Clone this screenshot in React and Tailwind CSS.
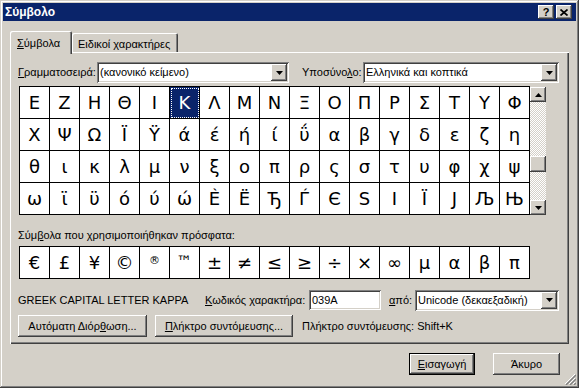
import React from "react";

const raised =
  "shadow-[inset_-1px_-1px_0_#404040,inset_1px_1px_0_#fff,inset_-2px_-2px_0_#808080,inset_2px_2px_0_#d4d0c8]";
const sunken =
  "shadow-[inset_1px_1px_0_#808080,inset_-1px_-1px_0_#fff,inset_2px_2px_0_#404040,inset_-2px_-2px_0_#d4d0c8]";

const rows = [
  "ΕΖΗΘΙΚΛΜΝΞΟΠΡΣΤΥΦ",
  "ΧΨΩΪΫάέήίΰαβγδεζη",
  "θικλμνξοπρςστυφχψ",
  "ωϊϋόύώЀЁЂЃЄЅІЇЈЉЊ",
];

const recent = ["€", "£", "¥", "©", "®", "™", "±", "≠", "≤", "≥", "÷", "×", "∞", "μ", "α", "β", "π"];

function U({ children }) {
  return <span className="underline decoration-1 underline-offset-[1px]">{children}</span>;
}

function Tri({ up }) {
  return (
    <svg width="7" height="4" viewBox="0 0 7 4" className={up ? "rotate-180" : ""}>
      <polygon points="0,0 7,0 3.5,4" fill="#000" />
    </svg>
  );
}

function Combo({ value, className }) {
  return (
    <div className={`flex h-[21px] bg-white p-[2px] ${sunken} ${className}`}>
      <div className="flex-1 pl-[1px] leading-[17px] whitespace-nowrap overflow-hidden">{value}</div>
      <div className={`w-[16px] h-[17px] bg-[#d4d0c8] flex items-center justify-center ${raised}`}>
        <Tri />
      </div>
    </div>
  );
}

function Button({ children, className = "", isDefault }) {
  if (isDefault) {
    return (
      <div className={`border border-black bg-[#d4d0c8] ${className}`}>
        <div className={`h-full flex items-center justify-center ${raised}`}>{children}</div>
      </div>
    );
  }
  return (
    <div className={`flex items-center justify-center bg-[#d4d0c8] ${raised} ${className}`}>{children}</div>
  );
}

function Cell({ ch, selected }) {
  let size = "items-center text-[18px]";
  if (ch === "®") size = "items-start pt-[6px] text-[11px]";
  if (ch === "™") size = "items-start pt-[3px] text-[16px]";
  return (
    <div
      className={`h-[32px] border-r border-b border-black flex justify-center ${size} ${
        selected
          ? "bg-[#0a246a] text-white outline-1 outline-dotted outline-white outline-offset-[-2px]"
          : "bg-white"
      }`}
    >
      {ch}
    </div>
  );
}

export default function App() {
  return (
    <div className="relative w-[579px] h-[388px] bg-[#d4d0c8] p-[3px] flex flex-col text-[11px] text-black font-['Liberation_Sans',Arial,sans-serif] shadow-[inset_-1px_-1px_0_#404040,inset_1px_1px_0_#d4d0c8,inset_-2px_-2px_0_#808080,inset_2px_2px_0_#fff] overflow-hidden">
      {/* title bar */}
      <div className="h-[18px] bg-[#0a246a] flex items-center justify-between pl-[2px] pr-[4px]">
        <span className="text-white font-bold text-[12px]">Σύμβολο</span>
        <div className="flex gap-[2px]">
          <div className={`w-[16px] h-[14px] bg-[#d4d0c8] flex items-center justify-center font-bold text-[11px] leading-none ${raised}`}>
            ?
          </div>
          <div className={`w-[16px] h-[14px] bg-[#d4d0c8] flex items-center justify-center ${raised}`}>
            <svg width="8" height="7" viewBox="0 0 8 7">
              <path d="M0.5 0.5 L7.5 6.5 M7.5 0.5 L0.5 6.5" stroke="#000" strokeWidth="1.7" />
            </svg>
          </div>
        </div>
      </div>

      {/* tabs */}
      <div className="ml-[7px] mt-[10px] flex items-end h-[21px]">
        <div className="relative z-10 w-[62px] h-[23px] -mb-[2px] bg-[#d4d0c8] pl-[7px] pt-[4px] rounded-t-[2px] shadow-[inset_1px_1px_0_#fff,inset_-1px_0_0_#404040,inset_-2px_0_0_#808080]">
          <U>Σ</U>ύμβολα
        </div>
        <div className="w-[106px] h-[19px] bg-[#d4d0c8] pl-[6px] pt-[3px] rounded-t-[2px] shadow-[inset_1px_1px_0_#fff,inset_-1px_0_0_#404040,inset_-2px_0_0_#808080]">
          Ειδικοί χαρακτήρες
        </div>
      </div>

      {/* panel */}
      <div className="ml-[7px] w-[559px] h-[292px] flex flex-col shadow-[inset_1px_1px_0_#fff,inset_-1px_-1px_0_#404040,inset_-2px_-2px_0_#808080]">
        <div className="mt-[10px] pl-[8px] flex items-center h-[21px]">
          <span className="w-[79px] whitespace-nowrap">
            <U>Γ</U>ραμματοσειρά:
          </span>
          <Combo value="(κανονικό κείμενο)" className="w-[192px]" />
          <span className="ml-[13px] w-[61px] whitespace-nowrap">
            Υποσύνο<U>λ</U>ο:
          </span>
          <Combo value="Ελληνικά και κοπτικά" className="w-[196px]" />
        </div>

        {/* symbol grid */}
        <div className="mt-[3px] pl-[9px] flex">
          <div className="grid grid-cols-[repeat(17,30px)] border-l border-t border-black font-['DejaVu_Sans',sans-serif]">
            {rows.map((r, ri) =>
              [...r].map((ch, ci) => <Cell key={`${ri}-${ci}`} ch={ch} selected={ri === 0 && ci === 5} />)
            )}
          </div>
          <div className="mt-[1px] w-[16px] h-[128px] flex flex-col bg-[repeating-conic-gradient(#fff_0_25%,#d4d0c8_0_50%)] bg-[length:2px_2px]">
            <div className={`h-[15px] bg-[#d4d0c8] flex items-center justify-center ${raised}`}>
              <Tri up />
            </div>
            <div className="flex-1">
              <div className={`mt-[54px] h-[16px] bg-[#d4d0c8] ${raised}`} />
            </div>
            <div className={`h-[15px] bg-[#d4d0c8] flex items-center justify-center ${raised}`}>
              <Tri />
            </div>
          </div>
        </div>

        <div className="mt-[14px] pl-[8px] h-[13px] leading-[13px]">
          Σύμ<U>β</U>ολα που χρησιμοποιήθηκαν πρόσφατα:
        </div>
        <div className="mt-[4px] pl-[9px] flex">
          <div className="grid grid-cols-[repeat(17,30px)] border-l border-t border-black font-['DejaVu_Sans',sans-serif]">
            {recent.map((ch, i) => (
              <Cell key={i} ch={ch} />
            ))}
          </div>
        </div>

        {/* info row */}
        <div className="mt-[11px] pl-[8px] flex items-center h-[20px]">
          <span className="w-[187px] whitespace-nowrap">GREEK CAPITAL LETTER KAPPA</span>
          <span className="w-[104px] whitespace-nowrap">
            <U>Κ</U>ωδικός χαρακτήρα:
          </span>
          <div className={`w-[72px] h-[20px] bg-white pl-[3px] leading-[20px] ${sunken}`}>039A</div>
          <span className="ml-[8px] w-[26px]">
            <U>α</U>πό:
          </span>
          <Combo value="Unicode (δεκαεξαδική)" className="w-[144px]" />
        </div>

        <div className="mt-[5px] pl-[8px] flex items-center h-[22px]">
          <Button className="w-[129px] h-[22px]">
            Αυτόματη Διόρ<U>θ</U>ωση...
          </Button>
          <Button className="ml-[8px] w-[138px] h-[22px]">
            <U>Π</U>λήκτρο συντόμευσης...
          </Button>
          <span className="ml-[9px] whitespace-nowrap">Πλήκτρο συντόμευσης: Shift+K</span>
        </div>
      </div>

      {/* bottom buttons */}
      <div className="mt-[9px] flex justify-end pr-[16px] gap-[18px]">
        <Button isDefault className="w-[66px] h-[22px]">
          <U>Ε</U>ισαγωγή
        </Button>
        <Button className="w-[67px] h-[22px]">Άκυρο</Button>
      </div>

      {/* size grip */}
      <svg className="absolute right-[3px] bottom-[3px]" width="12" height="12" viewBox="0 0 12 12">
        <path d="M11 1 L1 11 M11 5 L5 11 M11 9 L9 11" stroke="#fff" strokeWidth="1" />
        <path d="M12 2 L2 12 M12 6 L6 12 M12 10 L10 12" stroke="#808080" strokeWidth="1.4" />
      </svg>
    </div>
  );
}
